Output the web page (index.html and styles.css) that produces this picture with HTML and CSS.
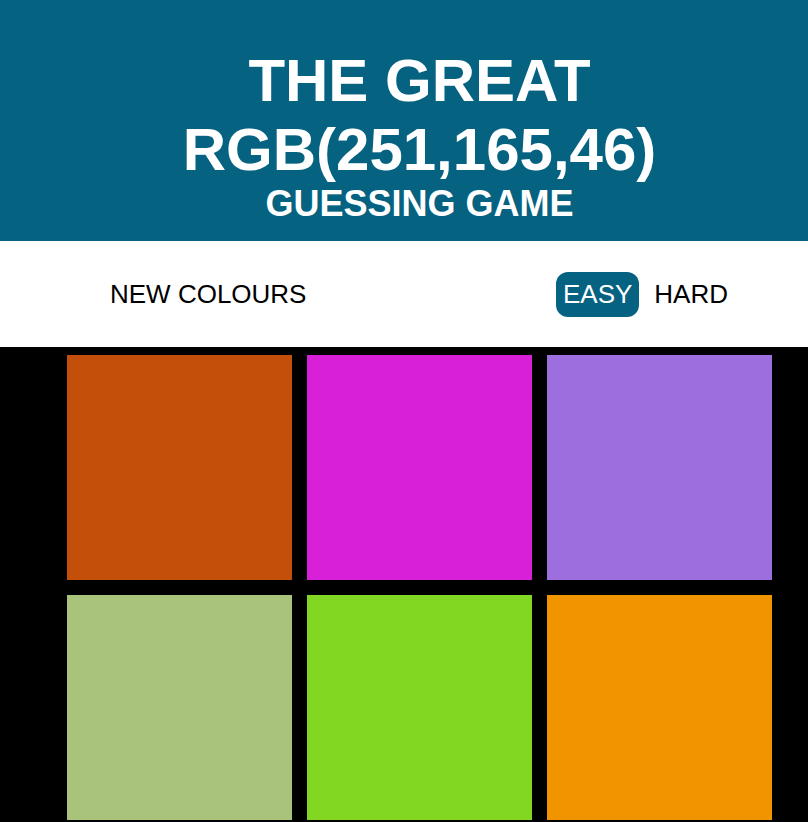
FILE: index.html
```html
<!DOCTYPE html>
<html lang="en">
<head>
<meta charset="utf-8">
<title>The Great RGB Guessing Game</title>
<link rel="stylesheet" href="styles.css">
</head>
<body>
<header class="title">
  <h1>
    <span class="line">THE GREAT</span>
    <span class="line rgb">RGB(251,165,46)</span>
    <span class="line sub">GUESSING GAME</span>
  </h1>
</header>
<nav class="controls">
  <button class="btn">NEW COLOURS</button>
  <div class="modes"><button class="btn selected">EASY</button> <button class="btn">HARD</button></div>
</nav>
<main class="board">
  <div class="square sq1"></div>
  <div class="square sq2"></div>
  <div class="square sq3"></div>
  <div class="square sq4"></div>
  <div class="square sq5"></div>
  <div class="square sq6"></div>
</main>
</body>
</html>
```
FILE: styles.css
```css
html, body {
  margin: 0;
  padding: 0;
  background: #000;
  font-family: "Liberation Sans", Arial, sans-serif;
}

.title {
  background: #066281;
  color: #fff;
  height: 241px;
  box-sizing: border-box;
  padding: 46px 0 0 31px;
  text-align: center;
}

.title h1 {
  margin: 0;
  font-weight: bold;
  font-size: 60px;
  line-height: normal;
}

.line {
  display: block;
}

.sub {
  font-size: 36px;
  line-height: 40px;
}

.controls {
  background: #fff;
  height: 106px;
  box-sizing: border-box;
  display: flex;
  align-items: center;
  justify-content: space-between;
  padding: 0 73px 0 103px;
}

.btn {
  font-family: "Liberation Sans", Arial, sans-serif;
  font-size: 26px;
  background: transparent;
  color: #000;
  border: none;
  padding: 7px 7px 8px;
  margin: 0;
  border-radius: 12px;
  line-height: 30px;
  cursor: pointer;
}

.modes {
  display: flex;
  gap: 8px;
}

.btn.selected {
  background: #066281;
  color: #fff;
}

.board {
  display: grid;
  grid-template-columns: repeat(3, 225px);
  grid-auto-rows: 225px;
  gap: 15px;
  padding: 8px 0 0 67px;
}

.sq1 { background: #c44f0b; }
.sq2 { background: #d920d9; }
.sq3 { background: #9d6ede; }
.sq4 { background: #a9c37b; }
.sq5 { background: #82d722; }
.sq6 { background: #f09400; }
```
